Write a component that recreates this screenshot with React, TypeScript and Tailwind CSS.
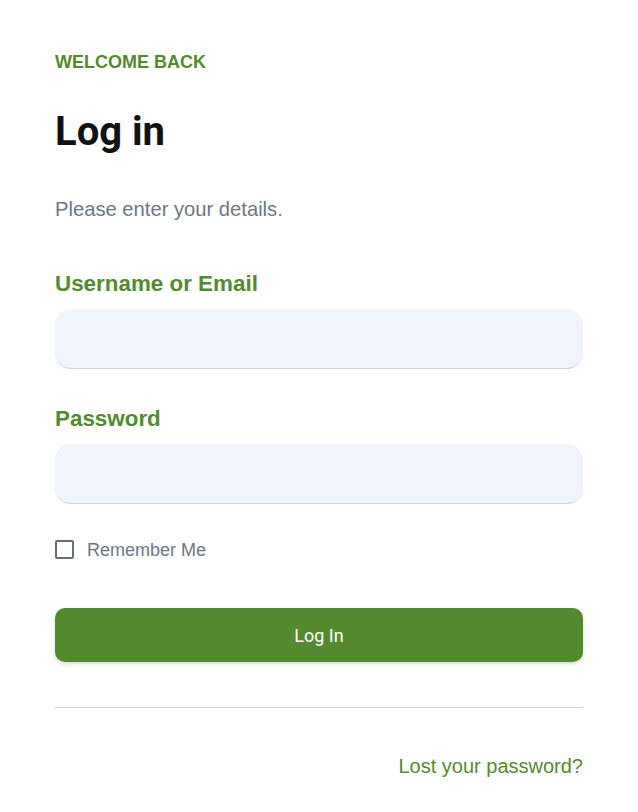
import { useState } from 'react';

export default function App() {
  const [remember, setRemember] = useState(false);

  return (
    <div className="min-h-screen bg-white font-['Liberation_Sans',Arial,sans-serif]">
      <form className="flex flex-col px-[55px] pt-[53px] pb-10" onSubmit={(e) => e.preventDefault()}>
        <p className="text-[18px] leading-none font-bold uppercase text-[#538a2d]">Welcome back</p>
        <h1 className="mt-[41px] text-[40px] leading-none font-bold text-[#111] font-['Roboto',sans-serif]">Log in</h1>
        <p className="mt-[47px] text-[20.2px] leading-[20px] text-[#6b7787]">Please enter your details.</p>

        <label className="mt-[54px] text-[22.4px] leading-[22px] font-bold text-[#538a2d]">Username or Email</label>
        <input
          type="text"
          className="mt-[14px] h-[60px] w-full rounded-2xl border-b border-[#cfd2da] bg-[#f0f4fc] px-4 text-[18px] outline-none"
        />

        <label className="mt-[39px] text-[22.4px] leading-[22px] font-bold text-[#538a2d]">Password</label>
        <input
          type="password"
          className="mt-[14px] h-[60px] w-full rounded-2xl border-b border-[#cfd2da] bg-[#f0f4fc] px-4 text-[18px] outline-none"
        />

        <label className="mt-[36px] flex items-center gap-[13px] cursor-pointer">
          <input
            type="checkbox"
            checked={remember}
            onChange={(e) => setRemember(e.target.checked)}
            className="appearance-none h-[19px] w-[19px] rounded-[2px] border-2 border-[#66717f] bg-white"
          />
          <span className="text-[18px] leading-none text-[#6b7787]">Remember Me</span>
        </label>

        <button
          type="submit"
          className="mt-[49px] h-[54px] w-full rounded-[10px] bg-[#538a2d] text-[18px] text-white font-['Roboto',sans-serif] shadow-[0_2px_4px_rgba(0,0,0,0.15)]"
        >
          Log In
        </button>

        <hr className="mt-[45px] border-t border-[#d4d4d8]" />

        <a href="#" className="mt-[48px] self-end text-[20px] leading-none text-[#538a2d] hover:underline">
          Lost your password?
        </a>
      </form>
    </div>
  );
}
